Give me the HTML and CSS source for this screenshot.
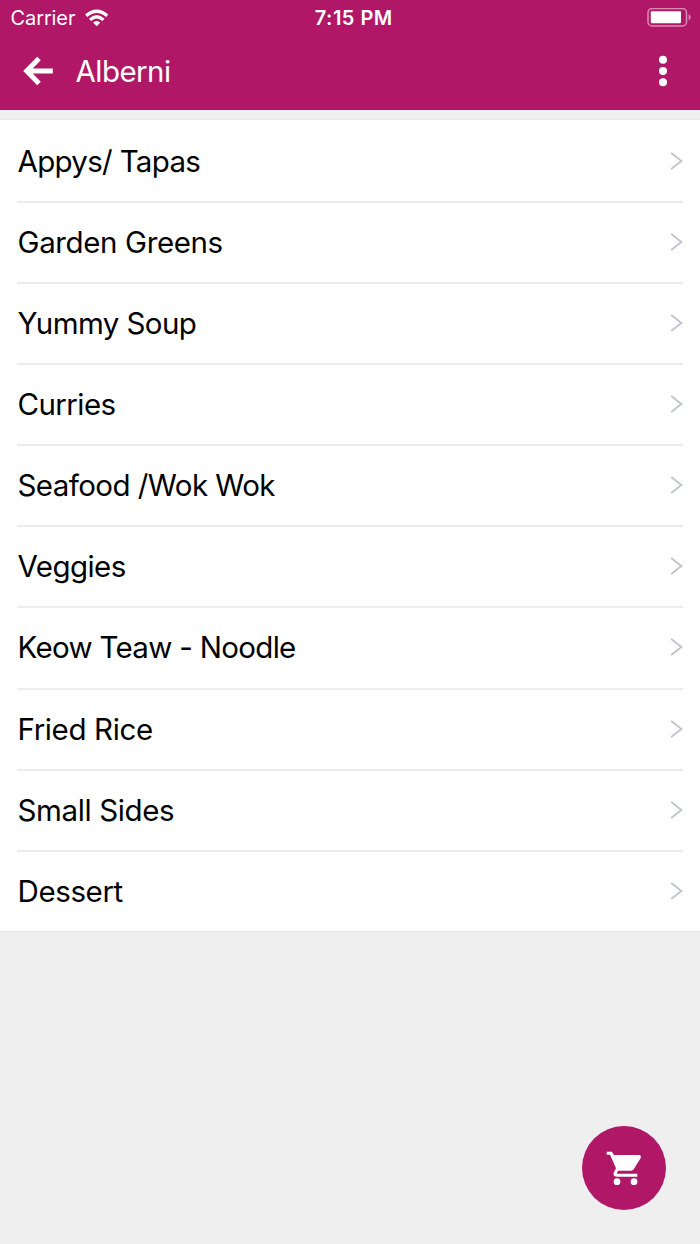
FILE: index.html
```html
<!DOCTYPE html>
<html lang="en">
<head>
<meta charset="utf-8">
<title>Alberni</title>
<link rel="stylesheet" href="styles.css">
</head>
<body>
<header class="header">
  <div class="status">
    <div class="status-left">
      <span class="carrier">Carrier</span>
      <svg class="wifi" viewBox="0 0 24 18" width="24" height="18">
        <path d="M1.200 6.700Q11.700-2.300 22.200 6.700" fill="none" stroke="#fff" stroke-width="3.300"/>
        <path d="M5 10.900Q11.700 4.700 18.400 10.900" fill="none" stroke="#fff" stroke-width="3.200"/>
        <path d="M8.100 13.600Q11.700 10.200 15.300 13.600L11.700 17.300Z" fill="#fff"/>
      </svg>
    </div>
    <span class="clock">7:15 PM</span>
    <svg class="battery" viewBox="0 0 44 20" width="44" height="20">
      <rect x="1" y=".5" width="38.500" height="17.500" rx="4" fill="none" stroke="#d78db4" stroke-width="1.500"/>
      <rect x="3.800" y="3.300" width="30.200" height="12" rx="1" fill="#fff"/>
      <path d="M41.700 6.200C44.300 7.200 44.300 11.400 41.700 12.400Z" fill="#d78db4"/>
    </svg>
  </div>
  <div class="toolbar">
    <svg class="back" viewBox="0 0 30 30"><path d="M16 2.500 3.700 15 16 27.500M4 15H29.800"/></svg>
    <h1 class="title">Alberni</h1>
    <svg class="more" viewBox="0 0 10 32"><circle cx="5" cy="4.800" r="4"/><circle cx="5" cy="16" r="4"/><circle cx="5" cy="27.200" r="4"/></svg>
  </div>
</header>
<main class="content">
  <ul class="list">
    <li class="item"><span class="label tightest">Appys/ Tapas</span><svg class="chevron" viewBox="0 0 13 18"><path d="M1.200 1 11.400 9 1.200 17"/></svg></li>
    <li class="item"><span class="label snug">Garden Greens</span><svg class="chevron" viewBox="0 0 13 18"><path d="M1.200 1 11.400 9 1.200 17"/></svg></li>
    <li class="item"><span class="label tight">Yummy Soup</span><svg class="chevron" viewBox="0 0 13 18"><path d="M1.200 1 11.400 9 1.200 17"/></svg></li>
    <li class="item"><span class="label tight">Curries</span><svg class="chevron" viewBox="0 0 13 18"><path d="M1.200 1 11.400 9 1.200 17"/></svg></li>
    <li class="item"><span class="label tight">Seafood /Wok Wok</span><svg class="chevron" viewBox="0 0 13 18"><path d="M1.200 1 11.400 9 1.200 17"/></svg></li>
    <li class="item"><span class="label tight">Veggies</span><svg class="chevron" viewBox="0 0 13 18"><path d="M1.200 1 11.400 9 1.200 17"/></svg></li>
    <li class="item"><span class="label tightest">Keow Teaw - Noodle</span><svg class="chevron" viewBox="0 0 13 18"><path d="M1.200 1 11.400 9 1.200 17"/></svg></li>
    <li class="item"><span class="label snug">Fried Rice</span><svg class="chevron" viewBox="0 0 13 18"><path d="M1.200 1 11.400 9 1.200 17"/></svg></li>
    <li class="item"><span class="label snug">Small Sides</span><svg class="chevron" viewBox="0 0 13 18"><path d="M1.200 1 11.400 9 1.200 17"/></svg></li>
    <li class="item"><span class="label snug">Dessert</span><svg class="chevron" viewBox="0 0 13 18"><path d="M1.200 1 11.400 9 1.200 17"/></svg></li>
  </ul>
</main>
<button class="fab" aria-label="Cart">
  <svg class="cart" viewBox="0 0 132 132"><path d="M14 14H30L35.500 24H111Q119 25 116 33L95 67Q92 71 87 71H49L45 77Q44 80 47 80H106V89H44Q32 87 35 77L42 64 24 23H14Z"/><circle cx="45" cy="104" r="10"/><circle cx="96" cy="104" r="10"/></svg>
</button>
</body>
</html>
```
FILE: styles.css
```css
* { box-sizing: border-box; }

body {
  margin: 0;
  min-height: 1244px;
  background: #efefef;
  font-family: Inter, Roboto, "Liberation Sans", sans-serif;
  color: #000;
}

.header {
  height: 110px;
  background: #b01867;
  border-bottom: 1px solid #a21a60;
  color: #fff;
}

.status {
  display: grid;
  grid-template-columns: 1fr auto 1fr;
  align-items: center;
  height: 35px;
  padding: 0 9px 0 10.5px;
}

.status-left {
  display: flex;
  align-items: center;
  gap: 9.5px;
}

.carrier {
  font-size: 20px;
  line-height: 36px;
  letter-spacing: -0.1px;
}

.wifi { display: block; }

.clock {
  padding-left: 6px;
  font-size: 20px;
  font-weight: 600;
  line-height: 36px;
  letter-spacing: 0.5px;
}

.battery { justify-self: end; display: block; }

.toolbar {
  display: flex;
  align-items: center;
  height: 72px;
  padding: 0 32.5px 0 23px;
}

.back {
  width: 30px;
  height: 30px;
  fill: none;
  stroke: #fff;
  stroke-width: 5;
}

.title {
  flex: 1;
  margin: 0 0 0 22.5px;
  font-size: 29.5px;
  font-weight: 400;
  line-height: 40px;
  letter-spacing: -0.55px;
}

.more {
  width: 10px;
  height: 32px;
  fill: #fff;
}

.content { padding-top: 10px; }

.list {
  margin: 0;
  padding: 0 17px;
  list-style: none;
  background: #fff;
  box-shadow: 0 0 0 1px #e8e8e8;
}

.item {
  display: flex;
  align-items: center;
  justify-content: space-between;
  height: 81.1px;
  padding-bottom: 1.2px;
  border-bottom: 2px solid #ececec;
}

.item:first-child { height: 83px; padding-bottom: 0; }
.item:last-child { height: 79.6px; border-bottom: 0; }

.label {
  padding-left: 0.5px;
  font-size: 29.5px;
  line-height: 40px;
}

.snug { letter-spacing: -0.38px; }
.tight { letter-spacing: -0.57px; }
.tightest { letter-spacing: -0.69px; }

.chevron {
  width: 13px;
  height: 18px;
  fill: none;
  stroke: #bfc2cb;
  stroke-width: 1.8;
}

.fab {
  position: absolute;
  left: 581.5px;
  top: 1125.5px;
  display: flex;
  align-items: center;
  justify-content: center;
  width: 84.5px;
  height: 84.5px;
  padding: 1.5px 0 0 0.5px;
  border: 0;
  border-radius: 50%;
  background: #b01867;
}

.cart {
  width: 44px;
  height: 44px;
  fill: #fff;
}
```
